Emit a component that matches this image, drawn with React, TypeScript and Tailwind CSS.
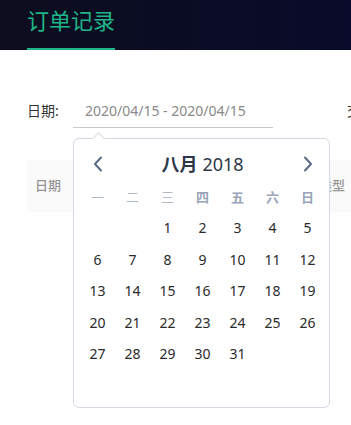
import React from "react";

const font = { fontFamily: '"Noto Sans", "Noto Sans CJK SC", sans-serif' };

function ChevronLeft() {
  return (
    <svg width="10" height="16" viewBox="0 0 10 16" fill="none">
      <path d="M8 1.5L2 8l6 6.5" stroke="#5b6b86" strokeWidth="2" strokeLinecap="round" strokeLinejoin="round" />
    </svg>
  );
}
function ChevronRight() {
  return (
    <svg width="10" height="16" viewBox="0 0 10 16" fill="none">
      <path d="M2 1.5L8 8l-6 6.5" stroke="#5b6b86" strokeWidth="2" strokeLinecap="round" strokeLinejoin="round" />
    </svg>
  );
}

export default function App() {
  const weekdays = ["一", "二", "三", "四", "五", "六", "日"];
  const days: (number | null)[] = [null, null];
  for (let i = 1; i <= 31; i++) days.push(i);
  while (days.length % 7) days.push(null);

  return (
    <div className="relative w-[351px] h-[425px] overflow-hidden bg-white" style={font}>
      <div className="h-[50px] bg-gradient-to-r from-[#0c0d1e] to-[#0a0b2a] pl-[27px] flex">
        <div className="h-[50px] border-b-2 border-[#1fb489] text-[22px] leading-[40px] text-[#1fb489] w-[88px] whitespace-nowrap">
          订单记录
        </div>
      </div>

      <div className="mt-[43px] flex items-center pl-[27px] whitespace-nowrap w-[500px]">
        <div className="text-[14px] text-[#333] w-[46px] shrink-0">日期:</div>
        <div className="h-[35px] w-[200px] border-b border-[#c8c8c8] flex items-center pl-[12px] text-[14px] text-[#8a8a8a] shrink-0">
          2020/04/15 - 2020/04/15
        </div>
        <div className="ml-[74px] text-[14px] text-[#333] shrink-0">交易类型:</div>
      </div>

      <div className="mt-[32px] ml-[27px] h-[52px] bg-[#fafafa] flex items-center justify-between pl-[8px] pr-[6px] text-[13px] text-[#959595] font-medium">
        <span>日期</span>
        <span>类型</span>
      </div>

      {/* date picker popup */}
      <div className="absolute left-[73px] top-[138px] w-[257px] h-[270px] border border-[#d3dae3] rounded-[6px] bg-white">
        <div className="absolute left-[20px] top-[-5px] w-[9px] h-[9px] bg-white border-l border-t border-[#d3dae3] rotate-45" />
        <div className="pt-[5px] ml-[6px] w-[245px]">
          <div className="h-[40px] grid grid-cols-7 items-center">
            <div className="flex justify-center"><ChevronLeft /></div>
            <div className="col-span-5 flex justify-center items-center text-[18px] text-[#2d3748]">
              <span className="font-bold">八月</span>
              <span className="ml-[5px] font-normal">2018</span>
            </div>
            <div className="flex justify-center"><ChevronRight /></div>
          </div>
          <div className="h-[28px] grid grid-cols-7 items-center text-[13px]">
            {weekdays.map((w, i) => (
              <div key={w} className={"text-center " + (i < 3 ? "text-[#b0bac7]" : "text-[#98a4b8] font-semibold")}>
                {w}
              </div>
            ))}
          </div>
          <div className="grid grid-cols-7 auto-rows-[31.5px] items-center text-[14px] text-[#2b2b2b]">
            {days.map((d, i) => (
              <div key={i} className="text-center">{d ?? ""}</div>
            ))}
          </div>
        </div>
      </div>
    </div>
  );
}
